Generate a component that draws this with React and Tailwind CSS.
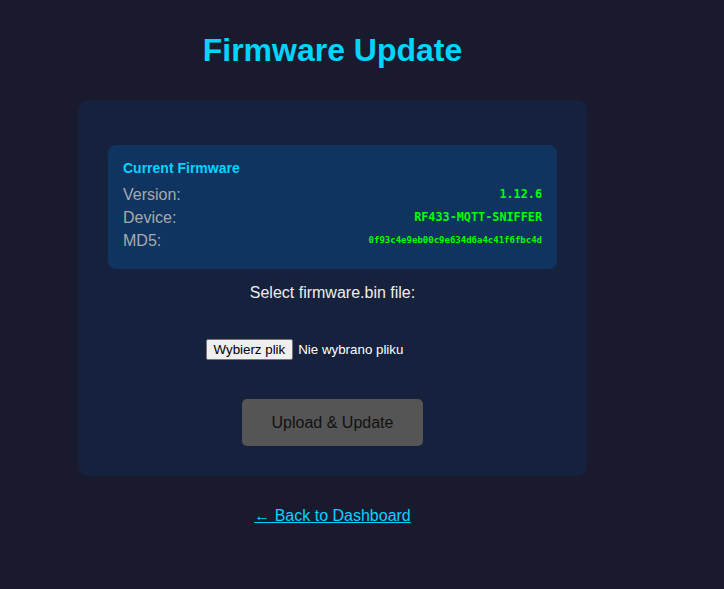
import React from 'react'

const rows = [
    { label: 'Version:', value: '1.12.6', size: 'text-[11.8px]' },
    { label: 'Device:', value: 'RF433-MQTT-SNIFFER', size: 'text-[11.8px]' },
    { label: 'MD5:', value: '0f93c4e9eb00c9e634d6a4c41f6fbc4d', size: 'text-[9px]' }
]

export default function App() {
    return (
        <div className="min-h-screen bg-[#1a1a2e] font-['Liberation_Sans',Arial,sans-serif] pt-[32px]">
            <div className="w-[509px] ml-[78px]">
                <h1 className="text-center text-[32px] leading-[37px] font-bold text-[#00d4ff]">Firmware Update</h1>

                <div className="mt-[31px] bg-[#16213e] rounded-[10px] pt-[45px] pb-[30px] px-[30px]">
                    <div className="bg-[#0f3460] rounded-[8px] pt-[15px] pb-[17px] px-[15px]">
                        <h3 className="text-[14px] leading-[16px] font-bold text-[#00d4ff]">Current Firmware</h3>
                        <div className="mt-[7px]">
                            {rows.map((row) => (
                                <div key={row.label} className="flex justify-between leading-[23px]">
                                    <span className="text-[16px] text-[#aaaaaa]">{row.label}</span>
                                    <span className={`font-['DejaVu_Sans_Mono',monospace] font-bold text-[#00ff00] ${row.size}`}>{row.value}</span>
                                </div>
                            ))}
                        </div>
                    </div>

                    <p className="mt-[15px] text-center text-[16px] leading-[18px] text-[#eeeeee]">Select firmware.bin file:</p>

                    <div className="mt-[37px] flex justify-center">
                        <div className="w-[254px] flex items-center">
                            <span className="h-[21px] px-[7px] bg-[#efefef] border border-[#767676] rounded-[2px] text-[13.33px] leading-[19px] text-black">Wybierz plik</span>
                            <span className="ml-[5px] text-[13.33px] text-white">Nie wybrano pliku</span>
                        </div>
                    </div>

                    <div className="mt-[39px] flex justify-center">
                        <button className="w-[181px] h-[47px] bg-[#555555] rounded-[5px] text-[16px] text-[#111111]">Upload &amp; Update</button>
                    </div>
                </div>

                <div className="mt-[28px] text-center">
                    <a href="#" className="text-[16px] leading-[18px] text-[#00d4ff] underline">← Back to Dashboard</a>
                </div>
            </div>
        </div>
    )
}
